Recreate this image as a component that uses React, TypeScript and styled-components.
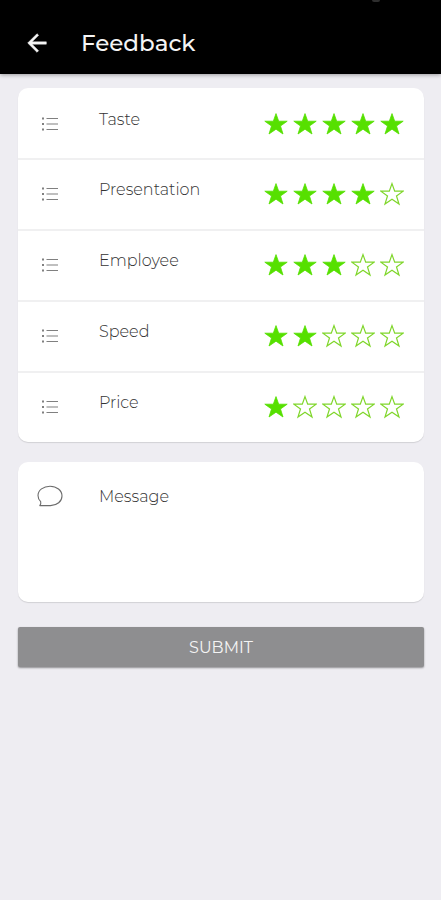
import { useState } from "react";
import styled, { createGlobalStyle } from "styled-components";

const GlobalStyle = createGlobalStyle`
  *, *::before, *::after { box-sizing: border-box; }
  body {
    margin: 0;
    background: #eeedf2;
    font-family: Montserrat, Inter, sans-serif;
  }
`;

const Header = styled.header`
  position: relative;
  display: flex;
  align-items: center;
  gap: 30px;
  height: 74px;
  padding: 12px 23px 0;
  background: #000;
  color: #f5f5f5;
  box-shadow: 0 1px 4px rgba(0, 0, 0, 0.35);
`;

const CameraDot = styled.span`
  position: absolute;
  top: 0;
  right: 61px;
  width: 8px;
  height: 2px;
  border-radius: 0 0 4px 4px;
  background: #2e2e2e;
`;

const BackButton = styled.button`
  display: flex;
  padding: 0;
  border: 0;
  background: none;
  color: inherit;
  cursor: pointer;
`;

const Title = styled.h1`
  margin: 0;
  font-size: 23px;
  line-height: 28px;
  font-weight: 500;
`;

const Form = styled.form`
  display: flex;
  flex-direction: column;
  padding: 14px 17px 24px 18px;
`;

const Card = styled.div`
  border-radius: 10px;
  background: #fff;
  box-shadow: 0 1px 1px rgba(0, 0, 0, 0.12);
`;

const RatingRow = styled.fieldset`
  display: flex;
  align-items: flex-start;
  min-width: 0;
  height: 71px;
  margin: 0;
  padding: 20px 20px 0 18px;
  border: 0;

  &:first-child {
    height: 70px;
  }

  & + & {
    box-shadow: inset 0 2px 0 #f0f0f1;
  }
`;

const IconSlot = styled.span`
  display: flex;
  flex: none;
  justify-content: center;
  width: 28px;
  color: #6c6c6c;
`;

const ListSlot = styled(IconSlot)`
  padding-top: 8px;
  color: #808080;
`;

const Label = styled.span`
  flex: 1;
  padding: 1px 0 0 35px;
  color: #333;
  font-size: 16px;
  line-height: 22px;
  font-weight: 300;
`;

const Stars = styled.div`
  display: flex;
  gap: 5px;
  padding-top: 4px;
`;

const StarLabel = styled.label`
  position: relative;
  display: flex;
  width: 24px;
  height: 24px;
  color: #56e000;
  cursor: pointer;
`;

const StarInput = styled.input`
  position: absolute;
  inset: 0;
  width: 100%;
  height: 100%;
  margin: 0;
  opacity: 0;
  cursor: pointer;
`;

const MessageCard = styled(Card)`
  display: flex;
  height: 140px;
  margin-top: 20px;
  padding: 23px 18px 16px;
`;

const MessageInput = styled.textarea`
  flex: 1;
  min-width: 0;
  padding: 1px 0 0 35px;
  border: 0;
  outline: 0;
  resize: none;
  background: transparent;
  color: #333;
  font-family: inherit;
  font-size: 16px;
  line-height: 22px;
  font-weight: 300;

  &::placeholder {
    color: #333;
    opacity: 1;
  }
`;

const SubmitButton = styled.button`
  height: 40px;
  margin-top: 25px;
  padding: 1px 0 0;
  border: 0;
  border-radius: 2px;
  background: #8e8e90;
  box-shadow: 0 1px 2px rgba(0, 0, 0, 0.4);
  color: #f4f4f4;
  font-family: inherit;
  font-size: 16px;
  line-height: 20px;
  font-weight: 400;
  cursor: pointer;
`;

const ArrowIcon = () => (
  <svg width="28" height="28" viewBox="0 0 24 24" fill="currentColor" stroke="currentColor" strokeWidth="0.4" aria-hidden="true">
    <path d="M20 11H7.83l5.59-5.59L12 4l-8 8 8 8 1.41-1.41L7.83 13H20v-2z" />
  </svg>
);

const ListIcon = () => (
  <svg width="18" height="16" viewBox="0 0 18 16" fill="none" stroke="currentColor" aria-hidden="true">
    <path d="M5.5 2.5H17M5.5 8H17M5.5 13.5H17" strokeWidth="1.2" />
    <path d="M1 2.5h2M1 8h2M1 13.5h2" strokeWidth="1.8" />
  </svg>
);

const BubbleIcon = () => (
  <svg width="26" height="22" viewBox="0 0 26 22" fill="none" stroke="currentColor" strokeWidth="1.1" strokeLinejoin="round" aria-hidden="true">
    <path d="M13 1.2C6.3 1.2 1 5.300 1 10.500c0 2.500 1 4.600 2.700 6.200C4 18 3.800 19.500 2.800 20.600H13.500C20 20.600 25 16.300 25 11C25 5.500 19.700 1.200 13 1.200z" />
  </svg>
);

const StarIcon = ({ filled }: { filled: boolean }) => (
  <svg width="24" height="24" viewBox="0 0 24 24" aria-hidden="true">
    <path
      d="M12 1.6L14.7 9.2H23.2L16.5 14L19 22L12 17.2L5 22L7.5 14L0.8 9.2H9.3Z"
      fill={filled ? "currentColor" : "none"}
      stroke={filled ? "currentColor" : "#7fd62a"}
      strokeWidth={filled ? 0.8 : 1.2}
    />
  </svg>
);

type RatingProps = { name: string; initial: number };

function Rating({ name, initial }: RatingProps) {
  const [value, setValue] = useState(initial);
  const labelId = `rating-${name.toLowerCase()}`;
  return (
    <RatingRow aria-labelledby={labelId}>
      <ListSlot>
        <ListIcon />
      </ListSlot>
      <Label id={labelId}>{name}</Label>
      <Stars>
        {[1, 2, 3, 4, 5].map((n) => (
          <StarLabel key={n}>
            <StarIcon filled={n <= value} />
            <StarInput
              type="radio"
              name={name}
              value={n}
              checked={n === value}
              onChange={() => setValue(n)}
              aria-label={`${name}: ${n} of 5`}
            />
          </StarLabel>
        ))}
      </Stars>
    </RatingRow>
  );
}

const ratings: RatingProps[] = [
  { name: "Taste", initial: 5 },
  { name: "Presentation", initial: 4 },
  { name: "Employee", initial: 3 },
  { name: "Speed", initial: 2 },
  { name: "Price", initial: 1 },
];

export default function App() {
  return (
    <>
      <GlobalStyle />
      <Header>
        <CameraDot />
        <BackButton type="button" aria-label="Back">
          <ArrowIcon />
        </BackButton>
        <Title>Feedback</Title>
      </Header>
      <main>
        <Form onSubmit={(event) => event.preventDefault()}>
          <Card>
            {ratings.map((rating) => (
              <Rating key={rating.name} {...rating} />
            ))}
          </Card>
          <MessageCard>
            <IconSlot>
              <BubbleIcon />
            </IconSlot>
            <MessageInput placeholder="Message" aria-label="Message" />
          </MessageCard>
          <SubmitButton type="submit">SUBMIT</SubmitButton>
        </Form>
      </main>
    </>
  );
}
